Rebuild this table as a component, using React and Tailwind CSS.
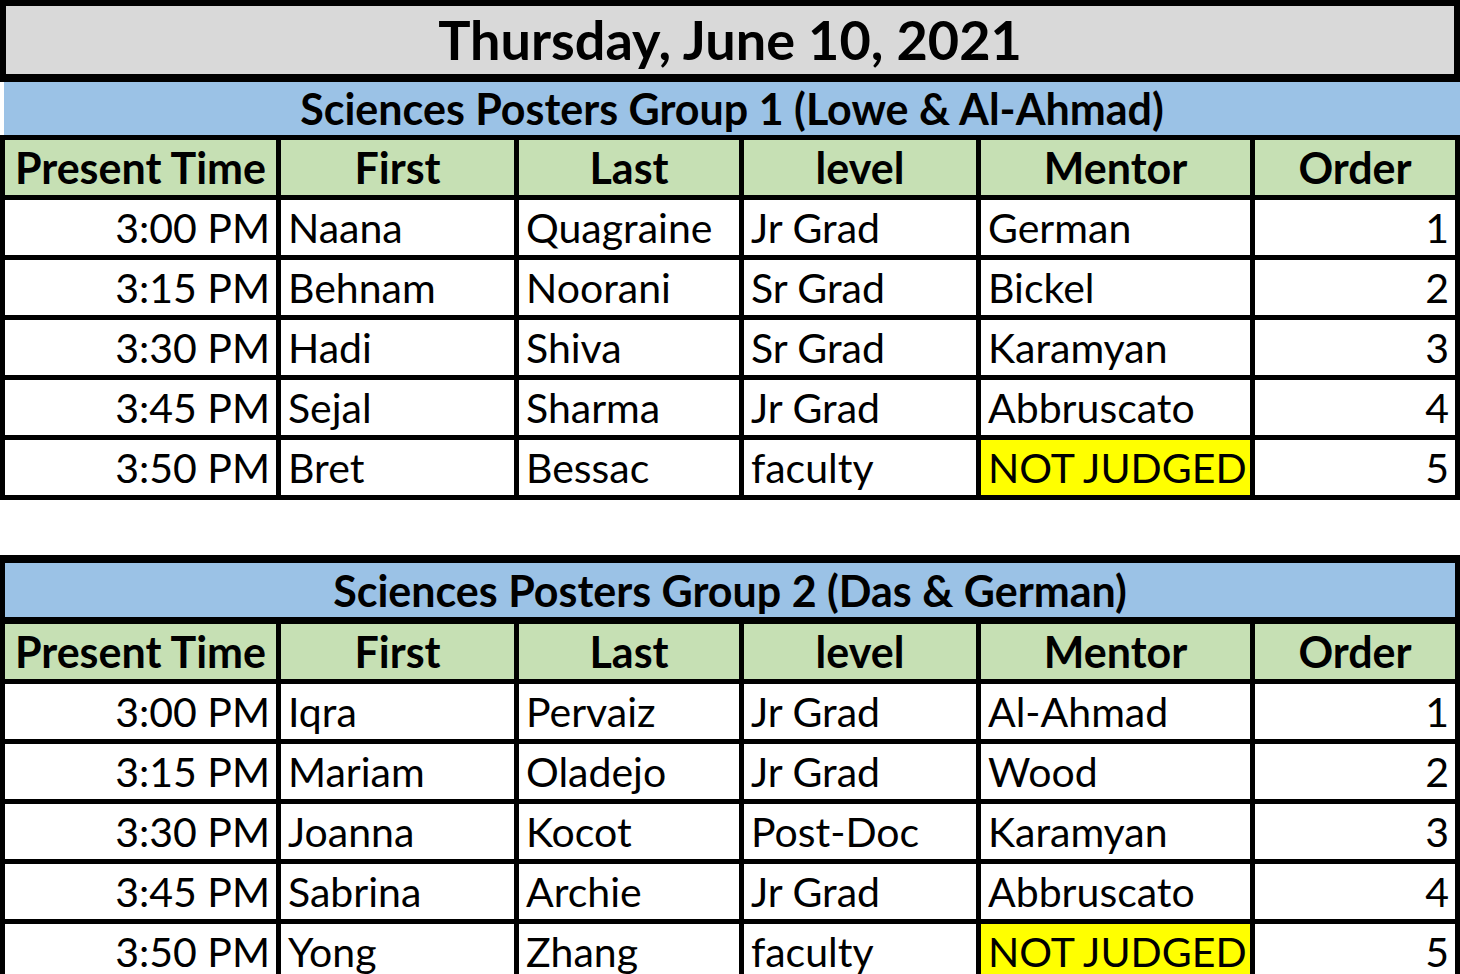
import React from "react";

// column widths measured from the sheet, 5px black rules between them
const cols = "grid grid-cols-[271px_233px_220px_232px_269px_200px] gap-[5px] bg-black p-[5px]";

const headers = ["Present Time", "First", "Last", "level", "Mentor", "Order"];

const group1 = [
    ["3:00 PM", "Naana", "Quagraine", "Jr Grad", "German", "1"],
    ["3:15 PM", "Behnam", "Noorani", "Sr Grad", "Bickel", "2"],
    ["3:30 PM", "Hadi", "Shiva", "Sr Grad", "Karamyan", "3"],
    ["3:45 PM", "Sejal", "Sharma", "Jr Grad", "Abbruscato", "4"],
    ["3:50 PM", "Bret", "Bessac", "faculty", "NOT JUDGED", "5"],
];

const group2 = [
    ["3:00 PM", "Iqra", "Pervaiz", "Jr Grad", "Al-Ahmad", "1"],
    ["3:15 PM", "Mariam", "Oladejo", "Jr Grad", "Wood", "2"],
    ["3:30 PM", "Joanna", "Kocot", "Post-Doc", "Karamyan", "3"],
    ["3:45 PM", "Sabrina", "Archie", "Jr Grad", "Abbruscato", "4"],
    ["3:50 PM", "Yong", "Zhang", "faculty", "NOT JUDGED", "5"],
];

const HeaderRow = () => (
    <>
        {headers.map((h) => (
            <div key={h} className="h-[55px] bg-[#c6e0b4] flex items-center justify-center text-[43px] font-bold leading-none whitespace-nowrap">
                {h}
            </div>
        ))}
    </>
);

const DataRows = ({ rows }) => (
    <>
        {rows.map((row) =>
            row.map((cell, i) => {
                // time and order are numbers, so they sit on the right like excel does
                const right = i === 0 || i === 5;
                const yellow = cell === "NOT JUDGED";
                return (
                    <div
                        key={row[0] + i}
                        className={
                            "h-[55px] flex items-center text-[41px] leading-none whitespace-nowrap " +
                            (right ? "justify-end pr-[6px] " : "justify-start pl-[7px] ") +
                            (yellow ? "bg-[#ffff00]" : "bg-white")
                        }
                    >
                        {cell}
                    </div>
                );
            })
        )}
    </>
);

const App = () => {
    return (
        <div className="w-[1460px] bg-white text-black font-[Lato,sans-serif]">
            {/* date banner */}
            <div className="h-[82px] border-[6px] border-b-[8px] border-black bg-[#d9d9d9] flex items-center justify-center">
                <h1 className="text-[54px] font-bold leading-none">Thursday, June 10, 2021</h1>
            </div>

            {/* first group */}
            <div className="ml-[4px] h-[53px] bg-[#9bc2e6] flex items-center justify-center text-[43px] font-bold leading-none">
                Sciences Posters Group 1 (Lowe &amp; Al-Ahmad)
            </div>
            <div className={cols}>
                <HeaderRow />
                <DataRows rows={group1} />
            </div>

            {/* second group */}
            <div className={cols + " mt-[55px] pt-[8px]"}>
                <div className="col-span-6 h-[54px] mb-[2px] bg-[#9bc2e6] flex items-center justify-center text-[43px] font-bold leading-none">
                    Sciences Posters Group 2 (Das &amp; German)
                </div>
                <HeaderRow />
                <DataRows rows={group2} />
            </div>
        </div>
    );
};

export default App;
